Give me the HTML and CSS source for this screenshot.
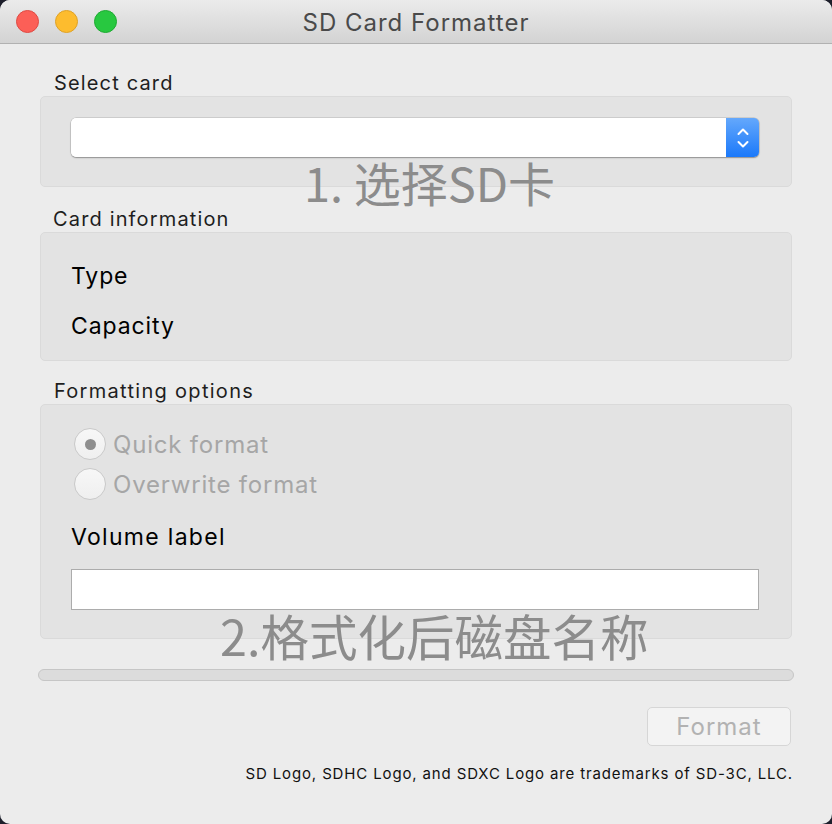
FILE: index.html
```html
<!DOCTYPE html>
<html lang="en">
<head>
<meta charset="utf-8">
<title>SD Card Formatter</title>
<link rel="stylesheet" href="styles.css">
</head>
<body>
<div class="window">
  <div class="titlebar">
    <div class="lights">
      <span class="light red"></span>
      <span class="light yellow"></span>
      <span class="light green"></span>
    </div>
    <div class="title">SD Card Formatter</div>
  </div>
  <div class="content">
    <div class="label label-first">Select card</div>
    <div class="box box-select">
      <div class="select">
        <div class="select-field"></div>
        <div class="stepper">
          <svg width="14" height="26" viewBox="0 0 14 26">
            <path d="M2.5 9 L7 4.5 L11.5 9" fill="none" stroke="#fff" stroke-width="2" stroke-linecap="round" stroke-linejoin="round"/>
            <path d="M2.5 17 L7 21.5 L11.5 17" fill="none" stroke="#fff" stroke-width="2" stroke-linecap="round" stroke-linejoin="round"/>
          </svg>
        </div>
      </div>
    </div>

    <div class="label label-info">Card information</div>
    <div class="box box-info">
      <div class="info-row">Type</div>
      <div class="info-row">Capacity</div>
    </div>

    <div class="label label-opts">Formatting options</div>
    <div class="box box-opts">
      <div class="radio-row"><span class="radio checked"></span><span class="radio-text">Quick format</span></div>
      <div class="radio-row"><span class="radio"></span><span class="radio-text">Overwrite format</span></div>
      <div class="vol-label">Volume label</div>
      <div class="vol-input"></div>
    </div>

    <div class="progress"></div>

    <div class="actions">
      <div class="btn">Format</div>
    </div>
    <div class="footer">SD Logo, SDHC Logo, and SDXC Logo are trademarks of SD-3C, LLC.</div>
  </div>

  <div class="note note-1">1. 选择SD卡</div>
  <div class="note note-2">2.格式化后磁盘名称</div>
</div>
</body>
</html>
```

FILE: styles.css
```css
html, body {
  margin: 0;
  padding: 0;
  background: #1d1f2b;
}
body {
  width: 832px;
  height: 824px;
  overflow: hidden;
  font-family: Inter, Roboto, "Liberation Sans", "Noto Sans CJK SC", sans-serif;
}
.window {
  position: relative;
  width: 832px;
  height: 824px;
  background: #ececec;
  border-radius: 10px;
  overflow: hidden;
}
.titlebar {
  position: relative;
  height: 43px;
  background: linear-gradient(#ebebeb, #d3d3d3);
  border-bottom: 1px solid #b1b1b1;
  display: flex;
  align-items: center;
  justify-content: center;
}
.lights {
  position: absolute;
  left: 16px;
  top: 10px;
  display: flex;
  gap: 16px;
}
.light {
  width: 23px;
  height: 23px;
  border-radius: 50%;
  box-sizing: border-box;
}
.red { background: #fc5f57; border: 1px solid #de4a43; }
.yellow { background: #fdbc2e; border: 1px solid #dea126; }
.green { background: #28c840; border: 1px solid #1eaa32; }
.title {
  font-size: 24px;
  color: #4a4a4a;
  letter-spacing: 1px;
  padding-top: 1px;
}
.content {
  padding: 0 40px;
}
.label {
  font-size: 20px;
  line-height: 26px;
  color: #1e1e1e;
  padding-left: 14px;
  letter-spacing: 1.15px;
}
.label-first { margin-top: 26px; }
.label-info { margin-top: 19px; padding-left: 13px; }
.label-opts { margin-top: 17px; letter-spacing: 1.3px; }
.box {
  background: #e3e3e3;
  border: 1px solid #dadada;
  border-radius: 5px;
  box-sizing: border-box;
}
.box-select {
  height: 91px;
  padding: 21px 32px 0 30px;
}
.select {
  display: flex;
  height: 39px;
  border-radius: 5px;
  box-shadow: 0 0 0 0.5px rgba(0,0,0,0.18), 0 1px 1.5px rgba(0,0,0,0.3);
  overflow: hidden;
}
.select-field {
  flex: 1;
  background: #fff;
}
.stepper {
  width: 33px;
  background: linear-gradient(#64a8fc, #1b79fa);
  display: flex;
  align-items: center;
  justify-content: center;
}
.box-info {
  height: 129px;
  padding: 18px 30px 0;
}
.info-row {
  font-size: 23px;
  line-height: 50px;
  color: #000;
  letter-spacing: 0.9px;
}
.box-opts {
  height: 235px;
  padding: 19px 32px 0 30px;
}
.radio-row {
  display: flex;
  align-items: center;
  height: 40px;
  padding-left: 3px;
  gap: 7px;
}
.radio {
  width: 32px;
  height: 32px;
  box-sizing: border-box;
  border-radius: 50%;
  border: 1px solid #c9c9c9;
  background: linear-gradient(#f7f7f7, #efefef);
  display: flex;
  align-items: center;
  justify-content: center;
}
.radio.checked::after {
  content: "";
  width: 11px;
  height: 11px;
  border-radius: 50%;
  background: #8e8e8e;
}
.radio-text {
  font-size: 24px;
  color: #a6a6a6;
  letter-spacing: 0.8px;
}
.vol-label {
  margin-top: 18px;
  font-size: 23px;
  line-height: 30px;
  color: #000;
  letter-spacing: 1.3px;
}
.vol-input {
  margin-top: 17px;
  height: 41px;
  box-sizing: border-box;
  background: #fff;
  border: 1px solid #acacac;
}
.progress {
  margin: 30px -2px 0 -2px;
  height: 12px;
  box-sizing: border-box;
  background: #dcdcdc;
  border: 1px solid #c6c6c6;
  border-radius: 6px;
}
.actions {
  display: flex;
  justify-content: flex-end;
  margin-top: 26px;
  padding-right: 1px;
}
.btn {
  width: 144px;
  height: 39px;
  box-sizing: border-box;
  border: 1px solid #d6d6d6;
  border-radius: 5px;
  background: #f3f3f3;
  color: #b2b2b2;
  font-size: 24px;
  letter-spacing: 1px;
  display: flex;
  align-items: center;
  justify-content: center;
}
.footer {
  margin-top: 18px;
  margin-right: -1px;
  text-align: right;
  font-size: 15px;
  line-height: 20px;
  color: #111;
  letter-spacing: 0.86px;
}
.note {
  position: absolute;
  font-family: "Noto Sans CJK SC", sans-serif;
  color: #8c8c8c;
  line-height: 1;
  white-space: nowrap;
}
.note-1 {
  left: 304px;
  top: 158px;
  font-size: 47px;
}
.note-2 {
  left: 220px;
  top: 611px;
  font-size: 48.5px;
}
```
